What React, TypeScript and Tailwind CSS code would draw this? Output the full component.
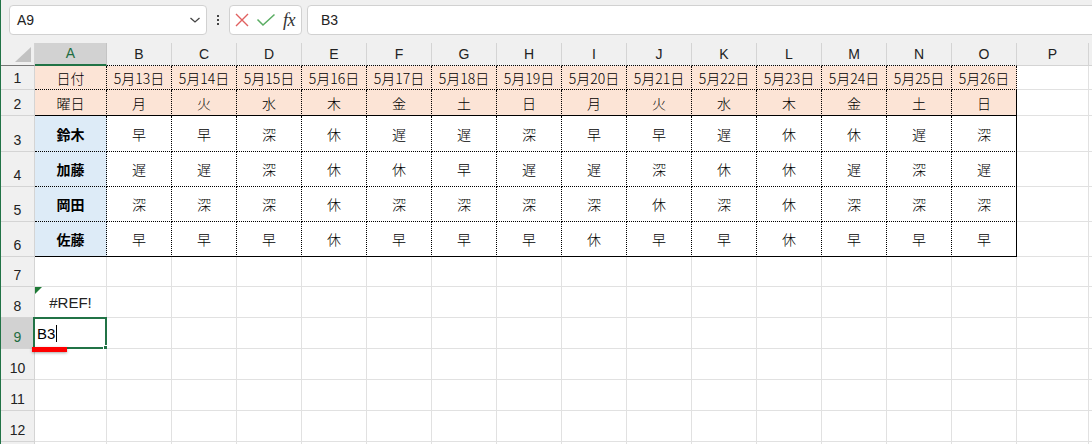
import React from 'react';

const jp = "font-['Noto_Sans_CJK_JP',sans-serif]";
const lat = "font-['Liberation_Sans',Arial,sans-serif]";

const COLS = ['A', 'B', 'C', 'D', 'E', 'F', 'G', 'H', 'I', 'J', 'K', 'L', 'M', 'N', 'O', 'P', 'Q'];
const colW = (c: number) => (c === 0 || c >= 15 ? 'w-[72px]' : 'w-[65px]');

const ROW_H = [
  'h-[24px]', 'h-[26px]', 'h-[36px]', 'h-[35px]', 'h-[35px]', 'h-[35px]',
  'h-[30px]', 'h-[31px]', 'h-[31px]', 'h-[31px]', 'h-[31px]', 'h-[31px]', 'h-[31px]',
];

const days = ['月', '火', '水', '木', '金', '土', '日', '月', '火', '水', '木', '金', '土', '日'];
const dates = Array.from({ length: 14 }, (_, i) => `5月${13 + i}日`);

const staff = [
  { name: '鈴木', shifts: '早早深休遅遅深早早遅休休遅深' },
  { name: '加藤', shifts: '遅遅深休休早遅遅深休休遅深遅' },
  { name: '岡田', shifts: '深深深休深深深深休深休深深深' },
  { name: '佐藤', shifts: '早早早休早早早休早早休早早早' },
];

// text for a given row (1-based) and column index (0 = A)
function cellText(r: number, c: number): string {
  if (c > 14) return '';
  if (r === 1) return c === 0 ? '日付' : dates[c - 1];
  if (r === 2) return c === 0 ? '曜日' : days[c - 1];
  if (r >= 3 && r <= 6) {
    const s = staff[r - 3];
    return c === 0 ? s.name : s.shifts[c - 1];
  }
  return '';
}

function cellClass(r: number, c: number): string {
  const inTable = r <= 6 && c <= 14;
  if (!inTable) return 'border-r border-b border-[#e1e1e1] bg-white';
  let cls = 'border-r border-b border-dotted border-black';
  if (c === 14 && r >= 2) cls += ' [border-right-style:solid]!';
  if (r === 2 || r === 6) cls += ' [border-bottom-style:solid]!';
  if (r <= 2) cls += ' bg-[#fce4d6] font-light';
  else if (c === 0) cls += ' bg-[#ddebf7] font-bold';
  else cls += ' bg-white font-light';
  return cls;
}

const NameBox = () => (
  <div className="w-[198px] h-[30px] shrink-0 rounded-[4px] border border-[#d1d1d1] bg-white flex items-center justify-between pl-[7px] pr-[4px]">
    <span className={`${lat} text-[14px] text-[#222]`}>A9</span>
    <svg width="12" height="8" viewBox="0 0 12 8" className="mr-[1px]">
      <path d="M1.5 2 L6 6 L10.5 2" fill="none" stroke="#444" strokeWidth="1.3" />
    </svg>
  </div>
);

const FxBox = () => (
  <div className="w-[73px] h-[30px] shrink-0 rounded-[4px] border border-[#d1d1d1] bg-white flex items-center pl-[4px]">
    <svg width="16" height="16" viewBox="0 0 16 16" className="shrink-0">
      <path d="M2 2 L14 14 M14 2 L2 14" stroke="#e0605f" strokeWidth="1.4" fill="none" />
    </svg>
    <svg width="20" height="14" viewBox="0 0 20 14" className="ml-[6px] shrink-0">
      <path d="M1.5 6.5 L7 12 L18.5 1.5" stroke="#5aad63" strokeWidth="1.5" fill="none" />
    </svg>
    <span className="ml-[7px] font-['Liberation_Serif',serif] italic text-[18px] leading-none text-[#333] tracking-[-0.5px]">fx</span>
  </div>
);

export default function App() {
  return (
    <div className="relative w-[1092px] h-[444px] overflow-hidden bg-white border-l border-[#217346]">
      {/* formula bar */}
      <div className="h-[43px] bg-[#f0f0f0] flex items-start pt-[5px] pl-[8px]">
        <NameBox />
        <div className="w-[22px] h-[30px] shrink-0 flex flex-col items-center justify-center gap-[2px]">
          <span className="w-[2px] h-[2px] bg-[#444]" />
          <span className="w-[2px] h-[2px] bg-[#444]" />
          <span className="w-[2px] h-[2px] bg-[#444]" />
        </div>
        <FxBox />
        <div className="ml-[5px] w-[820px] h-[30px] shrink-0 rounded-[4px] border border-[#d1d1d1] bg-white flex items-center pl-[13px]">
          <span className={`${lat} text-[14px] text-[#222]`}>B3</span>
        </div>
      </div>

      {/* column headers */}
      <div className="flex h-[23px]">
        <div className="w-[34px] shrink-0 bg-[#f0f0f0] border-r border-b border-r-[#d4d4d4] border-b-[#777] flex items-end justify-end pr-[3px] pb-[3px]">
          <svg width="16" height="15" viewBox="0 0 16 15">
            <path d="M16 0 L16 15 L0 15 Z" fill="#c2c2c2" />
          </svg>
        </div>
        {COLS.map((col, c) => (
          <div
            key={col}
            className={`${colW(c)} shrink-0 flex items-center justify-center ${lat} text-[14px] ${
              c === 0
                ? 'bg-[#d2d2d2] text-[#1e6c41] border-r border-r-[#c4c4c4] border-b-2 border-b-[#217346]'
                : c <= 14
                ? 'bg-[#f0f0f0] text-[#222] border-r border-r-[#d4d4d4] border-b border-b-black border-dotted [border-right-style:solid]!'
                : 'bg-[#f0f0f0] text-[#222] border-r border-b border-[#d4d4d4]'
            }`}
          >
            {c <= 15 ? col : ''}
          </div>
        ))}
      </div>

      {/* rows */}
      {ROW_H.concat(['h-[31px]']).map((h, i) => {
        const r = i + 1;
        return (
          <div key={r} className={`flex ${h}`}>
            <div
              className={`w-[34px] shrink-0 border-r border-b border-[#d4d4d4] flex items-end justify-center pb-[4px] ${lat} text-[14px] leading-none ${
                r === 9 ? 'bg-[#d2d2d2] text-[#1e6c41]' : 'bg-[#f0f0f0] text-[#222]'
              }`}
            >
              {r <= 12 ? r : ''}
            </div>
            {COLS.map((col, c) => (
              <div
                key={col}
                className={`${colW(c)} shrink-0 relative flex items-center justify-center ${jp} text-[14px] leading-none text-black ${cellClass(r, c)}`}
              >
                {cellText(r, c)}
                {r === 8 && c === 0 && (
                  <>
                    <svg width="7" height="7" viewBox="0 0 7 7" className="absolute left-0 top-0">
                      <path d="M0 0 L7 0 L0 7 Z" fill="#1d7a35" />
                    </svg>
                    <span className={`${lat} text-[15px] text-[#222]`}>#REF!</span>
                  </>
                )}
                {r === 9 && c === 0 && (
                  <>
                    <div className={`absolute inset-0 flex items-center pl-[2px] ${lat} text-[15px] text-black`}>
                      B3
                      <span className="w-px h-[17px] bg-black ml-[1px]" />
                    </div>
                    <div className="absolute -left-[2px] -top-[1px] -right-[1px] -bottom-[1px] border-2 border-[#217346]" />
                    <div className="absolute -right-[3px] -bottom-[3px] w-[6px] h-[6px] bg-[#217346] border border-white" />
                  </>
                )}
              </div>
            ))}
          </div>
        );
      })}

      {/* red annotation underline */}
      <div className="absolute left-[31px] top-[347px] w-[35px] h-[5px] bg-[#ff0000] shadow-[0_1px_3px_rgba(0,0,0,0.35)]" />
    </div>
  );
}
